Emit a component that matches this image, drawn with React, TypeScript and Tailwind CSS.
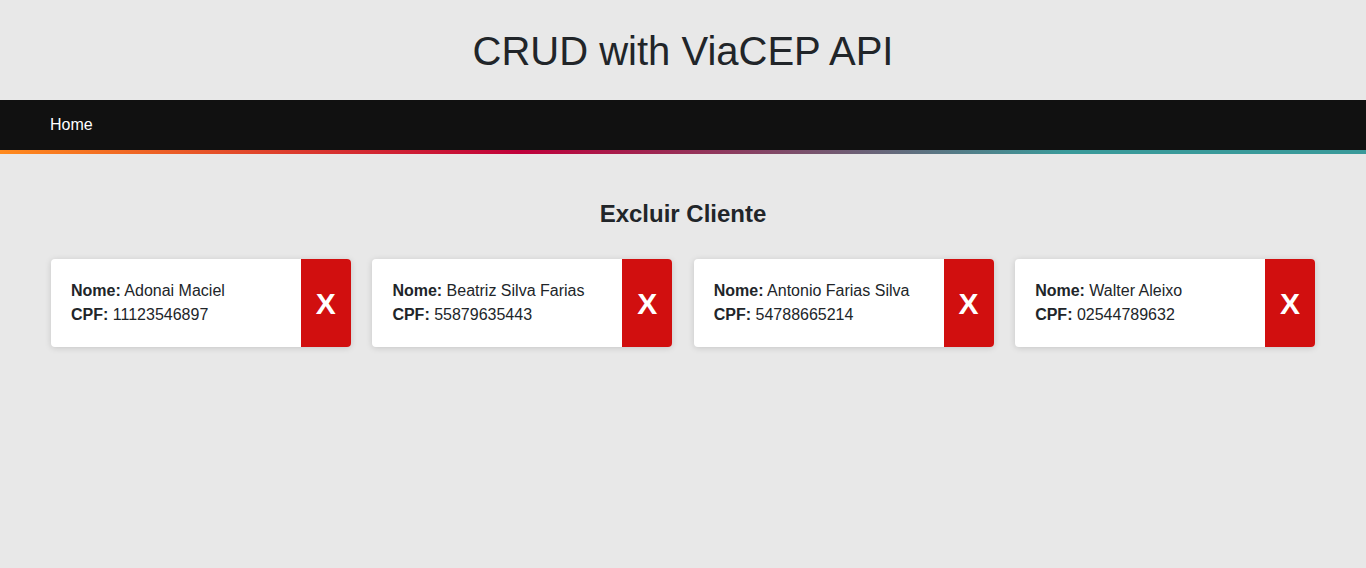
const clientes = [
  { nome: "Adonai Maciel", cpf: "11123546897" },
  { nome: "Beatriz Silva Farias", cpf: "55879635443" },
  { nome: "Antonio Farias Silva", cpf: "54788665214" },
  { nome: "Walter Aleixo", cpf: "02544789632" },
];

const App = () => {
  return (
    <div className="min-h-screen bg-[#e8e8e8] text-[#212529] font-['Liberation_Sans',Arial,sans-serif]">
      <header className="h-[100px] flex items-center justify-center">
        <h1 className="text-[40px] leading-none mt-[1px]">CRUD with ViaCEP API</h1>
      </header>

      <nav>
        <div className="h-[50px] bg-[#111111] flex items-center px-[50px]">
          <a href="#" className="text-white text-base">Home</a>
        </div>
        <div className="h-[4px] bg-[linear-gradient(to_right,#ff8a1d_0%,#c0003a_38%,#3a9a9a_78%,#3a9a9a_100%)]" />
      </nav>

      <main className="px-[51px] pt-[47px]">
        <h2 className="text-center text-[24px] font-bold leading-[26px]">Excluir Cliente</h2>

        <div className="grid grid-cols-4 gap-x-[21.5px] mt-[32px]">
          {clientes.map((c, i) => (
            <div
              key={i}
              className="h-[88px] flex bg-white rounded-[4px] shadow-[0_1px_6px_rgba(0,0,0,0.15)] overflow-hidden"
            >
              <div className="flex-1 flex flex-col justify-center pl-[20px] text-base leading-[24px]">
                <p><b>Nome:</b> {c.nome}</p>
                <p><b>CPF:</b> {c.cpf}</p>
              </div>
              <button className="w-[50px] bg-[#d10f0f] text-white text-[30px] font-bold flex items-center justify-center">
                X
              </button>
            </div>
          ))}
        </div>
      </main>
    </div>
  );
};

export default App;
